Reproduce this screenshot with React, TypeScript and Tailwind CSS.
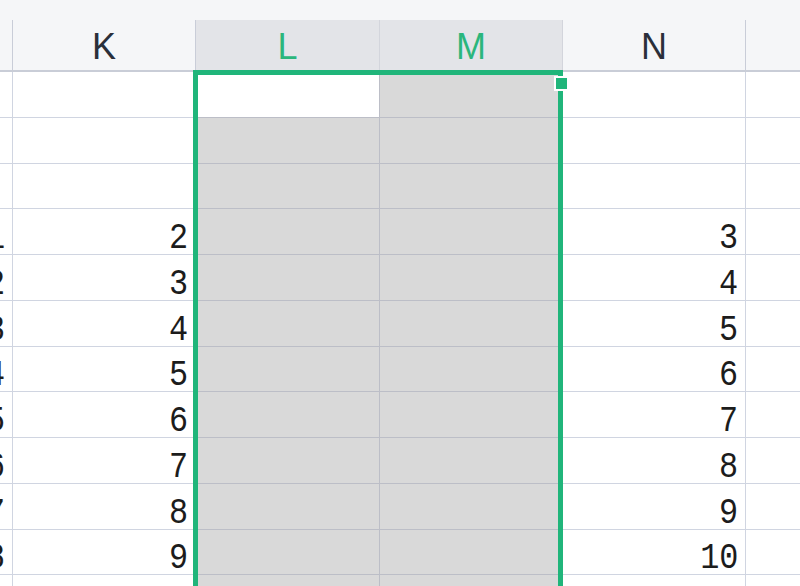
import React from 'react'

const GRID = 'grid grid-cols-[13px_183px_184px_183px_183px_1fr]'

// rows 1..12 as shown; numbers start on row 4
const ROWS = Array.from({ length: 12 }, (_, i) => {
  const n = i - 2
  if (i < 3 || i > 10) return { edge: '', k: '', n: '' }
  return { edge: String(n), k: String(n + 1), n: String(n + 2) }
})

const numCls =
  "inline-block origin-bottom-right scale-x-[0.86] translate-y-[3px] text-[37px] leading-none text-[#1c1c1c] font-['Liberation_Mono',monospace]"

function HeaderCell({ label, selected, last }: { label: string; selected?: boolean; last?: boolean }) {
  return (
    <div
      className={
        'flex items-center justify-center pt-[3px] ' +
        (selected ? 'bg-[#e3e4e8] text-[#2bb67c] ' : 'text-[#2a2f3a] ') +
        (last ? '' : selected ? 'border-r border-[#d3d5dc]' : 'border-r border-[#c9cdd8]')
      }
    >
      <span className="text-[36px] leading-none font-['Liberation_Sans',Arial,sans-serif]">{label}</span>
    </div>
  )
}

export default function App() {
  return (
    <div className="relative w-[800px] h-[586px] overflow-hidden bg-white select-none">
      {/* strip above the column headers */}
      <div className="h-[20px] bg-[#f5f6f8]" />

      {/* column headers */}
      <div className={GRID + ' h-[52px] bg-[#f5f6f8] border-b-2 border-[#c9cdd7]'}>
        <div className="border-r border-[#c9cdd8]" />
        <HeaderCell label="K" />
        <HeaderCell label="L" selected />
        <HeaderCell label="M" selected />
        <HeaderCell label="N" />
        <div />
      </div>

      {/* body rows */}
      {ROWS.map((r, i) => (
        <div key={i} className={GRID + ' h-[45.75px]'}>
          <div className="flex items-end justify-end overflow-hidden border-r border-b border-[#d0d5e1] pr-[7px]">
            <span className={numCls}>{r.edge}</span>
          </div>
          <div className="flex items-end justify-end border-r border-b border-[#d0d5e1] pr-[7px]">
            <span className={numCls}>{r.k}</span>
          </div>
          <div className={(i === 0 ? 'bg-white ' : 'bg-[#d9d9d9] ') + 'border-r border-b border-[#bcbec7]'} />
          <div className="bg-[#d9d9d9] border-r border-b border-[#bcbec7]" />
          <div className="flex items-end justify-end border-r border-b border-[#d0d5e1] pr-[7px]">
            <span className={numCls}>{r.n}</span>
          </div>
          <div className="border-b border-[#d0d5e1]" />
        </div>
      ))}

      {/* selection frame over L:M */}
      <div className="absolute left-[193px] top-[70px] w-[370px] h-[600px] border-[5px] border-[#20b57a]" />
      <div className="absolute left-[554px] top-[76px] w-[15px] h-[15px] bg-[#20b57a] border-2 border-white" />
    </div>
  )
}
